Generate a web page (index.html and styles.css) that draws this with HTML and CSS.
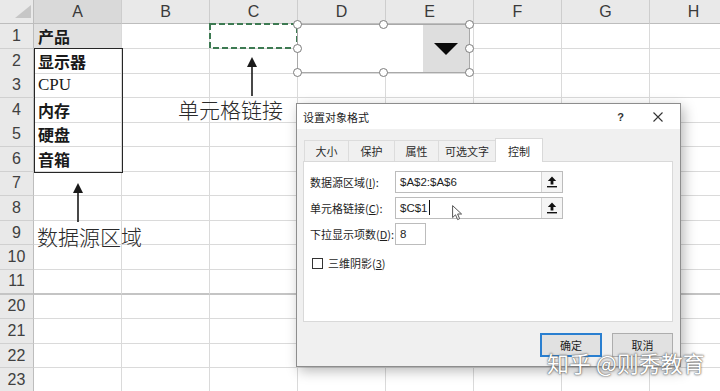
FILE: index.html
```html
<!DOCTYPE html>
<html lang="zh-CN">
<head>
    <meta charset="UTF-8">
    <meta name="viewport" content="width=device-width, initial-scale=1.0">
    <title>设置对象格式</title>
    <link rel="stylesheet" href="styles.css">
</head>
<body>
    <div class="sheet">
        <div class="row head">
            <div class="corner"><span class="tri"></span></div>
            <div class="col sel">A</div><div class="col">B</div><div class="col">C</div><div class="col">D</div>
            <div class="col">E</div><div class="col">F</div><div class="col">G</div><div class="col">H</div>
        </div>
        <div class="row">
            <div class="num">1</div><div class="cell filled">产品</div>
            <div class="cell"></div><div class="cell"></div><div class="cell"></div><div class="cell"></div><div class="cell"></div><div class="cell"></div><div class="cell"></div>
        </div>
        <div class="row">
            <div class="num">2</div><div class="cell">显示器</div>
            <div class="cell"></div><div class="cell"></div><div class="cell"></div><div class="cell"></div><div class="cell"></div><div class="cell"></div><div class="cell"></div>
        </div>
        <div class="row">
            <div class="num">3</div><div class="cell latin">CPU</div>
            <div class="cell"></div><div class="cell"></div><div class="cell"></div><div class="cell"></div><div class="cell"></div><div class="cell"></div><div class="cell"></div>
        </div>
        <div class="row">
            <div class="num">4</div><div class="cell">内存</div>
            <div class="cell"></div><div class="cell"></div><div class="cell"></div><div class="cell"></div><div class="cell"></div><div class="cell"></div><div class="cell"></div>
        </div>
        <div class="row">
            <div class="num">5</div><div class="cell">硬盘</div>
            <div class="cell"></div><div class="cell"></div><div class="cell"></div><div class="cell"></div><div class="cell"></div><div class="cell"></div><div class="cell"></div>
        </div>
        <div class="row">
            <div class="num">6</div><div class="cell">音箱</div>
            <div class="cell"></div><div class="cell"></div><div class="cell"></div><div class="cell"></div><div class="cell"></div><div class="cell"></div><div class="cell"></div>
        </div>
        <div class="row">
            <div class="num">7</div>
            <div class="cell"></div><div class="cell"></div><div class="cell"></div><div class="cell"></div><div class="cell"></div><div class="cell"></div><div class="cell"></div><div class="cell"></div>
        </div>
        <div class="row">
            <div class="num">8</div>
            <div class="cell"></div><div class="cell"></div><div class="cell"></div><div class="cell"></div><div class="cell"></div><div class="cell"></div><div class="cell"></div><div class="cell"></div>
        </div>
        <div class="row">
            <div class="num">9</div>
            <div class="cell"></div><div class="cell"></div><div class="cell"></div><div class="cell"></div><div class="cell"></div><div class="cell"></div><div class="cell"></div><div class="cell"></div>
        </div>
        <div class="row">
            <div class="num">10</div>
            <div class="cell"></div><div class="cell"></div><div class="cell"></div><div class="cell"></div><div class="cell"></div><div class="cell"></div><div class="cell"></div><div class="cell"></div>
        </div>
        <div class="row split">
            <div class="num">11</div>
            <div class="cell"></div><div class="cell"></div><div class="cell"></div><div class="cell"></div><div class="cell"></div><div class="cell"></div><div class="cell"></div><div class="cell"></div>
        </div>
        <div class="row">
            <div class="num">20</div>
            <div class="cell"></div><div class="cell"></div><div class="cell"></div><div class="cell"></div><div class="cell"></div><div class="cell"></div><div class="cell"></div><div class="cell"></div>
        </div>
        <div class="row">
            <div class="num">21</div>
            <div class="cell"></div><div class="cell"></div><div class="cell"></div><div class="cell"></div><div class="cell"></div><div class="cell"></div><div class="cell"></div><div class="cell"></div>
        </div>
        <div class="row">
            <div class="num">22</div>
            <div class="cell"></div><div class="cell"></div><div class="cell"></div><div class="cell"></div><div class="cell"></div><div class="cell"></div><div class="cell"></div><div class="cell"></div>
        </div>
        <div class="row">
            <div class="num">23</div>
            <div class="cell"></div><div class="cell"></div><div class="cell"></div><div class="cell"></div><div class="cell"></div><div class="cell"></div><div class="cell"></div><div class="cell"></div>
        </div>
    </div>

    <!-- source range A2:A6 -->
    <div class="range-box"></div>

    <!-- copy marquee on C1 -->
    <svg class="marquee" width="90" height="27" viewBox="0 0 90 27">
        <rect x="1" y="1" width="87" height="24" fill="none" stroke="#3d7a52" stroke-width="2" stroke-dasharray="6 3"/>
    </svg>

    <!-- combo box form control -->
    <div class="combo">
        <div class="combo-drop"><span class="down"></span></div>
        <span class="handle tl"></span><span class="handle tm"></span><span class="handle tr"></span>
        <span class="handle ml"></span><span class="handle mr"></span>
        <span class="handle bl"></span><span class="handle bm"></span><span class="handle br"></span>
    </div>

    <svg class="arrow arrow-link" width="14" height="40" viewBox="0 0 14 40">
        <polygon points="7,0 12,10 2,10" fill="#1a1a1a"/>
        <line x1="7" y1="9" x2="7" y2="39" stroke="#1a1a1a" stroke-width="1.6"/>
    </svg>
    <svg class="arrow arrow-source" width="14" height="40" viewBox="0 0 14 40">
        <polygon points="7,0 12,10 2,10" fill="#1a1a1a"/>
        <line x1="7" y1="9" x2="7" y2="39" stroke="#1a1a1a" stroke-width="1.6"/>
    </svg>

    <div class="note note-link">单元格链接</div>
    <div class="note note-source">数据源区域</div>

    <div class="dialog">
        <div class="dlg-title">
            <span>设置对象格式</span>
            <span class="dlg-help">?</span>
            <svg class="dlg-close" width="10" height="10" viewBox="0 0 10 10">
                <path d="M0.5 0.5 L9.5 9.5 M9.5 0.5 L0.5 9.5" stroke="#333" stroke-width="1.1"/>
            </svg>
        </div>
        <div class="dlg-body">
            <div class="tabs">
                <div class="tab t1">大小</div>
                <div class="tab t2">保护</div>
                <div class="tab t3">属性</div>
                <div class="tab t4">可选文字</div>
                <div class="tab t5 active">控制</div>
            </div>
            <div class="panel">
                <div class="field">
                    <label>数据源区域(<u>I</u>):</label>
                    <div class="input wide">
                        <span class="val">$A$2:$A$6</span>
                        <span class="ref-btn">
                            <svg width="10" height="12" viewBox="0 0 10 12"><path d="M5 0.5 L9.2 5 H6.4 V8.6 H3.6 V5 H0.8 Z" fill="#111"/><rect x="0" y="10" width="10" height="1.4" fill="#111"/></svg>
                        </span>
                    </div>
                </div>
                <div class="field">
                    <label>单元格链接(<u>C</u>):</label>
                    <div class="input wide">
                        <span class="val">$C$1</span><span class="caret"></span>
                        <svg class="pointer" width="11" height="16" viewBox="0 0 11 16"><path d="M0.6 0.6 L0.6 12.6 L3.5 9.8 L5.6 14.6 L7.6 13.7 L5.6 9 L9.6 9 Z" fill="#fff" stroke="#555" stroke-width="1"/></svg>
                        <span class="ref-btn">
                            <svg width="10" height="12" viewBox="0 0 10 12"><path d="M5 0.5 L9.2 5 H6.4 V8.6 H3.6 V5 H0.8 Z" fill="#111"/><rect x="0" y="10" width="10" height="1.4" fill="#111"/></svg>
                        </span>
                    </div>
                </div>
                <div class="field">
                    <label>下拉显示项数(<u>D</u>):</label>
                    <div class="input short"><span class="val">8</span></div>
                </div>
                <div class="check">
                    <span class="box"></span>
                    <span>三维阴影(<u>3</u>)</span>
                </div>
            </div>
            <div class="actions">
                <button class="btn primary">确定</button>
                <button class="btn">取消</button>
            </div>
        </div>
    </div>

    <div class="watermark">知乎 @则秀教育</div>
</body>
</html>
```

FILE: styles.css
```css
* {
    margin: 0;
    padding: 0;
    box-sizing: border-box;
}

body {
    width: 720px;
    height: 391px;
    overflow: hidden;
    position: relative;
    background: #ffffff;
    color: #222;
    font-family: "Liberation Sans", "Noto Sans CJK SC", sans-serif;
}

/* sheet grid */
.sheet {
    width: 738px;
}

.row {
    display: grid;
    grid-template-columns: 34px repeat(8, 88px);
    height: 24.6px;
}

.row.head {
    height: 24px;
}

.row > div {
    display: flex;
    align-items: center;
    border-right: 1px solid #dadada;
    border-bottom: 1px solid #dadada;
}

.row.split > div {
    border-bottom: 2px solid #c4c4c4;
}

.corner {
    position: relative;
    background: #e9e9e9;
}

.row > .corner {
    border-right-color: #bdbdbd;
    border-bottom-color: #bdbdbd;
}

.tri {
    position: absolute;
    right: 2px;
    bottom: 5px;
    width: 0;
    height: 0;
    border-left: 16px solid transparent;
    border-bottom: 13px solid #c6c6c6;
}

.row > .col {
    justify-content: center;
    background: #e9e9e9;
    border-right-color: #cdcdcd;
    border-bottom-color: #bdbdbd;
    font-size: 16px;
    color: #3a3a3a;
}

.row > .col.sel {
    background: #d9d9d9;
}

.row > .num {
    justify-content: center;
    background: #e9e9e9;
    border-right-color: #bdbdbd;
    border-bottom-color: #d0d0d0;
    font-size: 16px;
    color: #404040;
}

.cell {
    padding-left: 4px;
    font-family: "Noto Sans CJK SC", sans-serif;
    font-size: 16px;
    font-weight: bold;
    color: #1a1a1a;
}

.cell.latin {
    font-family: "Liberation Serif", serif;
    font-weight: normal;
    font-size: 17px;
}

.row > .cell.filled {
    background: #e1e1e1;
}

/* overlays on the sheet */
.range-box {
    position: absolute;
    left: 34px;
    top: 48px;
    width: 89px;
    height: 125px;
    border: 1.5px solid #262626;
}

.marquee {
    position: absolute;
    left: 209px;
    top: 23px;
}

.combo {
    position: absolute;
    left: 297px;
    top: 24px;
    width: 173px;
    height: 49px;
    background: #ffffff;
    border: 1px solid #a9a9a9;
    display: flex;
    justify-content: flex-end;
}

.combo-drop {
    width: 46px;
    height: 100%;
    background: #dedede;
    display: flex;
    align-items: center;
    justify-content: center;
}

.down {
    width: 0;
    height: 0;
    border-left: 12px solid transparent;
    border-right: 12px solid transparent;
    border-top: 12px solid #0a0a0a;
}

.handle {
    position: absolute;
    width: 9px;
    height: 9px;
    border-radius: 50%;
    background: #ffffff;
    border: 1.2px solid #7c7c7c;
}

.handle.tl { left: -5px; top: -5px; }
.handle.tm { left: 81px; top: -5px; }
.handle.tr { right: -5px; top: -5px; }
.handle.ml { left: -5px; top: 19px; }
.handle.mr { right: -5px; top: 19px; }
.handle.bl { left: -5px; bottom: -5px; }
.handle.bm { left: 81px; bottom: -5px; }
.handle.br { right: -5px; bottom: -5px; }

.arrow {
    position: absolute;
}

.arrow-link {
    left: 245px;
    top: 57px;
}

.arrow-source {
    left: 71px;
    top: 183px;
}

.note {
    position: absolute;
    font-family: "Noto Sans CJK SC", sans-serif;
    font-size: 21px;
    font-weight: 300;
    line-height: 24px;
    color: #2a2a2a;
    white-space: nowrap;
}

.note-link {
    left: 178px;
    top: 97px;
}

.note-source {
    left: 37px;
    top: 224px;
}

/* dialog */
.dialog {
    position: absolute;
    left: 296px;
    top: 103px;
    width: 385px;
    height: 264px;
    border: 1px solid #8d8d8d;
    background: #f0f0f0;
    box-shadow: 3px 4px 12px rgba(0, 0, 0, 0.28);
    font-family: "Noto Sans CJK SC", sans-serif;
    font-size: 11px;
    color: #1e1e1e;
    display: flex;
    flex-direction: column;
}

.dlg-title {
    height: 25px;
    background: #ffffff;
    display: flex;
    align-items: center;
    padding-left: 6px;
    flex-shrink: 0;
}

.dlg-title span:first-child {
    flex: 1;
}

.dlg-help {
    font-family: "Liberation Sans", sans-serif;
    font-weight: bold;
    font-size: 11px;
    color: #333;
    margin-right: 29px;
}

.dlg-close {
    margin-right: 17px;
}

.dlg-body {
    flex: 1;
    padding: 9px 7px 0 6px;
    display: flex;
    flex-direction: column;
}

.tabs {
    display: flex;
    align-items: flex-end;
    height: 23px;
    padding-left: 1px;
}

.tab {
    height: 21px;
    display: flex;
    align-items: center;
    justify-content: center;
    border-top: 1px solid #dcdcdc;
    border-left: 1px solid #dcdcdc;
    color: #2a2a2a;
}

.t1 { width: 44px; }
.t2 { width: 46px; }
.t3 { width: 44px; }
.t4 { width: 57px; }
.t5 { width: 48px; }

.tab.active {
    height: 24px;
    margin-bottom: -1px;
    background: #ffffff;
    border: 1px solid #d9d9d9;
    border-bottom: none;
    position: relative;
    z-index: 1;
}

.panel {
    width: 370px;
    height: 161px;
    background: #ffffff;
    border: 1px solid #d9d9d9;
    padding: 8px 0 0 6px;
    display: flex;
    flex-direction: column;
    gap: 3px;
}

.field {
    display: flex;
    align-items: center;
    height: 23px;
}

.field label {
    width: 85px;
    white-space: nowrap;
}

.input {
    position: relative;
    height: 22px;
    border: 1px solid #bcbcbc;
    background: #ffffff;
    display: flex;
    align-items: center;
    padding-left: 4px;
    font-family: "Liberation Sans", sans-serif;
    font-size: 11.5px;
}

.input.wide {
    width: 168px;
}

.input.short {
    width: 31px;
}

.caret {
    width: 1px;
    height: 15px;
    background: #111;
    margin-left: 1px;
}

.pointer {
    position: absolute;
    left: 56px;
    top: 7px;
}

.ref-btn {
    position: absolute;
    right: 0;
    top: 0;
    width: 21px;
    height: 20px;
    background: #f5f5f5;
    border-left: 1px solid #d4d4d4;
    display: flex;
    align-items: center;
    justify-content: center;
}

.check {
    display: flex;
    align-items: center;
    gap: 5px;
    margin-top: 7px;
    padding-left: 2px;
}

.box {
    width: 11px;
    height: 11px;
    border: 1px solid #333;
    background: #ffffff;
}

.actions {
    display: flex;
    justify-content: flex-end;
    gap: 10px;
    margin-top: 11px;
}

.btn {
    height: 24px;
    width: 61px;
    border: 1px solid #adadad;
    background: #e1e1e1;
    font-family: "Noto Sans CJK SC", sans-serif;
    font-size: 11px;
    color: #1e1e1e;
}

.btn.primary {
    width: 62px;
    border: 2px solid #2a7fd0;
}

.watermark {
    position: absolute;
    left: 547px;
    top: 349px;
    font-family: "Noto Sans CJK SC", sans-serif;
    font-size: 22px;
    line-height: 26px;
    color: #ffffff;
    white-space: nowrap;
    text-shadow: 0 0 1px #555, 0 0 2px #777, 0 0 3px rgba(0, 0, 0, 0.3);
}
```
